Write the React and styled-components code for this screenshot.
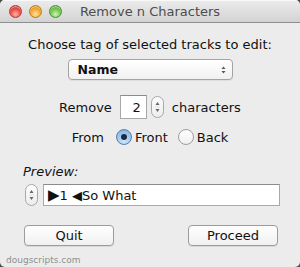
import React from 'react';
import styled, { createGlobalStyle } from 'styled-components';

const GlobalStyle = createGlobalStyle`
  html, body {
    margin: 0;
    padding: 0;
    background: #4a4a4a;
  }
  body {
    font-family: "DejaVu Sans", "Liberation Sans", sans-serif;
  }
`;

const Window = styled.div`
  width: 300px;
  height: 267px;
  background: #ececec;
  border-radius: 5px;
  overflow: hidden;
  display: flex;
  flex-direction: column;
`;

const TitleBar = styled.div`
  height: 22px;
  flex-shrink: 0;
  display: flex;
  align-items: center;
  position: relative;
  background: linear-gradient(#ececec, #d3d3d3);
  border-bottom: 1px solid #8e8e8e;
  box-shadow: inset 0 1px 0 #f8f8f8;
`;

const Lights = styled.div`
  display: flex;
  gap: 7px;
  padding-left: 9px;
`;

const Light = styled.div`
  width: 13px;
  height: 13px;
  border-radius: 50%;
  box-sizing: border-box;
  border: 1px solid ${p => p.edge};
  background: radial-gradient(circle at 50% 75%, ${p => p.glow} 0%, ${p => p.base} 55%, ${p => p.dark} 100%);
  box-shadow: inset 0 1px 1px rgba(255,255,255,0.6);
`;

const Title = styled.div`
  position: absolute;
  left: 0;
  right: 0;
  text-align: center;
  font-size: 13px;
  color: #4d4d4d;
  pointer-events: none;
`;

const Body = styled.div`
  flex: 1;
  display: flex;
  flex-direction: column;
  align-items: center;
  padding-top: 14px;
  font-size: 13px;
  color: #111;
`;

const Heading = styled.div`
  height: 16px;
  line-height: 16px;
`;

const Popup = styled.div`
  margin-top: 6px;
  width: 165px;
  height: 21px;
  box-sizing: border-box;
  border: 1px solid #a3a3a3;
  border-radius: 4px;
  background: linear-gradient(#ffffff, #f1f1f1);
  box-shadow: 0 1px 0 rgba(0,0,0,0.06);
  display: flex;
  align-items: center;
  justify-content: space-between;
  padding: 0 6px 0 9px;
  font-weight: bold;
  font-size: 12.5px;
`;

const Row = styled.div`
  display: flex;
  align-items: center;
  height: ${p => p.h}px;
  margin-top: ${p => p.mt}px;
`;

const NumField = styled.div`
  width: 27px;
  height: 24px;
  box-sizing: border-box;
  background: #fff;
  border: 1px solid #a8a8a8;
  border-top-color: #8c8c8c;
  display: flex;
  align-items: center;
  justify-content: flex-end;
  padding-right: 5px;
  margin: 0 4px 0 8px;
  font-size: 13px;
`;

const StepperBox = styled.div`
  width: 13px;
  height: 22px;
  box-sizing: border-box;
  border: 1px solid #a8a8a8;
  border-radius: 7px;
  background: linear-gradient(#fdfdfd, #ededed);
  display: flex;
  align-items: center;
  justify-content: center;
  flex-shrink: 0;
`;

const Label = styled.span`
  margin-left: ${p => p.ml || 0}px;
`;

const RadioCircle = styled.div`
  width: 16px;
  height: 16px;
  box-sizing: border-box;
  border-radius: 50%;
  border: 1px solid ${p => (p.on ? '#5a7fae' : '#9d9d9d')};
  background: ${p =>
    p.on
      ? 'radial-gradient(circle at 50% 80%, #cfe6fb 0%, #9cc6ee 55%, #79a9d9 100%)'
      : 'linear-gradient(#ffffff, #f0f0f0)'};
  display: flex;
  align-items: center;
  justify-content: center;
  margin-left: ${p => p.ml || 0}px;
  margin-right: 3px;
`;

const Dot = styled.div`
  width: 6px;
  height: 6px;
  border-radius: 50%;
  background: #1b2b3f;
`;

const PreviewLabel = styled.div`
  align-self: flex-start;
  margin: 18px 0 0 23px;
  font-style: italic;
  font-size: 13px;
  height: 16px;
  line-height: 16px;
  color: #111;
`;

const PreviewRow = styled.div`
  align-self: stretch;
  display: flex;
  align-items: center;
  margin: 4px 20px 0 25px;
  gap: 5px;
`;

const PreviewField = styled.div`
  flex: 1;
  height: 22px;
  box-sizing: border-box;
  background: #fff;
  border: 1px solid #a8a8a8;
  border-top-color: #8c8c8c;
  display: flex;
  align-items: center;
  padding-left: 4px;
  font-size: 13px;
  white-space: pre;
`;

const Big = styled.span`
  font-size: 15px;
  line-height: 1;
`;

const ButtonRow = styled.div`
  align-self: stretch;
  display: flex;
  justify-content: space-between;
  margin: 19px 22px 0 24px;
`;

const Button = styled.div`
  width: 90px;
  height: 21px;
  box-sizing: border-box;
  border: 1px solid #9c9c9c;
  border-radius: 4px;
  background: linear-gradient(#ffffff, #f0f0f0);
  box-shadow: 0 1px 0 rgba(0,0,0,0.08);
  display: flex;
  align-items: center;
  justify-content: center;
  font-size: 13px;
`;

const Footer = styled.div`
  align-self: flex-start;
  margin: 9px 0 0 6px;
  font-size: 9px;
  color: #8f8f8f;
`;

const Arrows = () => (
  <svg width="5" height="8" viewBox="0 0 5 8">
    <path d="M2.5 0.5 L4.5 3 L0.5 3 Z" fill="#555" />
    <path d="M2.5 7.5 L4.5 5 L0.5 5 Z" fill="#555" />
  </svg>
);

const Stepper = () => (
  <StepperBox>
    <svg width="5" height="14" viewBox="0 0 5 14">
      <path d="M2.5 2 L4.5 5 L0.5 5 Z" fill="#666" />
      <line x1="0" y1="7" x2="5" y2="7" stroke="#d0d0d0" strokeWidth="0.6" />
      <path d="M2.5 12 L4.5 9 L0.5 9 Z" fill="#666" />
    </svg>
  </StepperBox>
);

const Radio = ({ on, ml, children }) => (
  <>
    <RadioCircle on={on} ml={ml}>{on && <Dot />}</RadioCircle>
    <span>{children}</span>
  </>
);

export default function App() {
  return (
    <>
      <GlobalStyle />
      <Window>
        <TitleBar>
          <Lights>
            <Light base="#e5483f" glow="#ffb3a8" dark="#b52a22" edge="#b0362e" />
            <Light base="#f0a42b" glow="#ffe0a0" dark="#c27a12" edge="#b57c1c" />
            <Light base="#6dc349" glow="#d0f4b5" dark="#3e9227" edge="#4b8d2f" />
          </Lights>
          <Title>Remove n Characters</Title>
        </TitleBar>
        <Body>
          <Heading>Choose tag of selected tracks to edit:</Heading>
          <Popup>
            <span>Name</span>
            <Arrows />
          </Popup>
          <Row h={24} mt={15}>
            <Label>Remove</Label>
            <NumField>2</NumField>
            <Stepper />
            <Label ml={8}>characters</Label>
          </Row>
          <Row h={18} mt={9}>
            <Label>From</Label>
            <Radio on ml={12}>Front</Radio>
            <Radio ml={10}>Back</Radio>
          </Row>
          <PreviewLabel>Preview:</PreviewLabel>
          <PreviewRow>
            <Stepper />
            <PreviewField><Big>▶</Big>{'1 ◀So What'}</PreviewField>
          </PreviewRow>
          <ButtonRow>
            <Button>Quit</Button>
            <Button>Proceed</Button>
          </ButtonRow>
          <Footer>dougscripts.com</Footer>
        </Body>
      </Window>
    </>
  );
}
